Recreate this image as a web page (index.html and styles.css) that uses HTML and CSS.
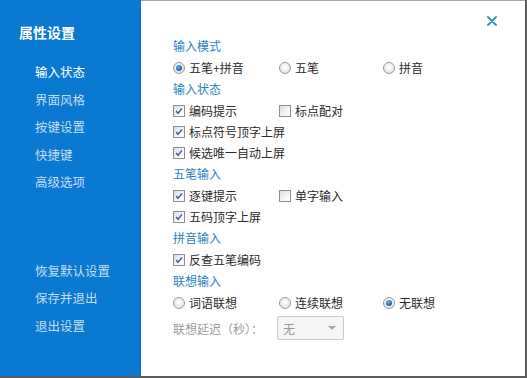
FILE: index.html
```html
<!DOCTYPE html>
<html lang="zh">
<head>
<meta charset="utf-8">
<title>属性设置</title>
<link rel="stylesheet" href="styles.css">
</head>
<body>
<div class="window">
  <aside class="sidebar">
    <div class="title">属性设置</div>
    <nav class="nav">
      <div class="nav-item active">输入状态</div>
      <div class="nav-item">界面风格</div>
      <div class="nav-item">按键设置</div>
      <div class="nav-item">快捷键</div>
      <div class="nav-item">高级选项</div>
    </nav>
    <nav class="nav nav-bottom">
      <div class="nav-item">恢复默认设置</div>
      <div class="nav-item">保存并退出</div>
      <div class="nav-item">退出设置</div>
    </nav>
  </aside>
  <main class="main">
    <button class="close" aria-label="关闭">
      <svg width="10" height="10" viewBox="0 0 10 10"><path d="M1 1L9 9M9 1L1 9" stroke="#3a8cc8" stroke-width="1.8" stroke-linecap="round"/></svg>
    </button>

    <div class="heading">输入模式</div>
    <div class="row">
      <label class="opt"><span class="radio checked"></span>五笔+拼音</label>
      <label class="opt"><span class="radio"></span>五笔</label>
      <label class="opt"><span class="radio"></span>拼音</label>
    </div>

    <div class="heading">输入状态</div>
    <div class="row">
      <label class="opt"><span class="cb"><svg viewBox="0 0 11 11"><path d="M2.3 5.6L4.4 8L8.8 2.6" fill="none" stroke="#3d5f9a" stroke-width="1.6"/></svg></span>编码提示</label>
      <label class="opt"><span class="cb"></span>标点配对</label>
    </div>
    <div class="row">
      <label class="opt wide"><span class="cb"><svg viewBox="0 0 11 11"><path d="M2.3 5.6L4.4 8L8.8 2.6" fill="none" stroke="#3d5f9a" stroke-width="1.6"/></svg></span>标点符号顶字上屏</label>
    </div>
    <div class="row">
      <label class="opt wide"><span class="cb"><svg viewBox="0 0 11 11"><path d="M2.3 5.6L4.4 8L8.8 2.6" fill="none" stroke="#3d5f9a" stroke-width="1.6"/></svg></span>候选唯一自动上屏</label>
    </div>

    <div class="heading">五笔输入</div>
    <div class="row">
      <label class="opt"><span class="cb"><svg viewBox="0 0 11 11"><path d="M2.3 5.6L4.4 8L8.8 2.6" fill="none" stroke="#3d5f9a" stroke-width="1.6"/></svg></span>逐键提示</label>
      <label class="opt"><span class="cb"></span>单字输入</label>
    </div>
    <div class="row">
      <label class="opt wide"><span class="cb"><svg viewBox="0 0 11 11"><path d="M2.3 5.6L4.4 8L8.8 2.6" fill="none" stroke="#3d5f9a" stroke-width="1.6"/></svg></span>五码顶字上屏</label>
    </div>

    <div class="heading">拼音输入</div>
    <div class="row">
      <label class="opt wide"><span class="cb"><svg viewBox="0 0 11 11"><path d="M2.3 5.6L4.4 8L8.8 2.6" fill="none" stroke="#3d5f9a" stroke-width="1.6"/></svg></span>反查五笔编码</label>
    </div>

    <div class="heading">联想输入</div>
    <div class="row">
      <label class="opt"><span class="radio"></span>词语联想</label>
      <label class="opt"><span class="radio"></span>连续联想</label>
      <label class="opt"><span class="radio checked"></span>无联想</label>
    </div>
    <div class="row delay">
      <span class="delay-label">联想延迟（秒）：</span>
      <div class="select"><span>无</span><span class="arrow"></span></div>
    </div>
  </main>
</div>
</body>
</html>
```

FILE: styles.css
```css
* { box-sizing: border-box; }
html, body { margin: 0; padding: 0; background: #fff; }
body {
  font-family: "Noto Sans CJK SC", "Microsoft YaHei", sans-serif;
  font-size: 12px;
  color: #2b2b2b;
}
.window {
  width: 527px;
  height: 378px;
  display: flex;
  border-right: 2px solid #5c5c5c;
  border-bottom: 2px solid #5c5c5c;
  background: #fff;
}
.sidebar {
  width: 141px;
  flex: none;
  background: #0a79d1;
  padding: 22px 0 0 19px;
  display: flex;
  flex-direction: column;
}
.title {
  color: #fff;
  font-size: 14px;
  font-weight: bold;
  line-height: 20px;
  height: 20px;
}
.nav {
  margin-top: 16px;
  padding-left: 16px;
}
.nav-bottom { margin-top: 61px; }
.nav-item {
  height: 27.5px;
  line-height: 27.5px;
  font-size: 12.5px;
  color: #c4ddf3;
  white-space: nowrap;
}
.nav-item.active { color: #fff; }

.main {
  flex: 1;
  position: relative;
  border-top: 1px solid #a8a8a8;
  padding: 34px 0 0 32px;
  display: flex;
  flex-direction: column;
}
.close {
  position: absolute;
  left: 344px;
  top: 13px;
  width: 14px;
  height: 14px;
  padding: 2px;
  border: 0;
  background: none;
  display: flex;
  align-items: center;
  justify-content: center;
}
.heading {
  height: 22px;
  line-height: 22px;
  color: #2a82c5;
}
.row {
  height: 21px;
  display: grid;
  grid-template-columns: 106px 104px auto;
  align-items: center;
}
.opt {
  display: flex;
  align-items: center;
  white-space: nowrap;
  line-height: 21px;
}
.opt.wide { grid-column: 1 / 4; }
.radio {
  width: 12px;
  height: 12px;
  border-radius: 50%;
  border: 1px solid #9b9b9b;
  background: radial-gradient(circle at 50% 40%, #ffffff 0%, #e6e6e6 70%, #d4d4d4 100%);
  margin-right: 4px;
  position: relative;
  flex: none;
}
.radio.checked::after {
  content: "";
  position: absolute;
  left: 2px;
  top: 2px;
  width: 6px;
  height: 6px;
  border-radius: 50%;
  background: radial-gradient(circle at 40% 35%, #6fb6ec 0%, #2a6fb0 55%, #143e6e 100%);
}
.cb {
  width: 12px;
  height: 12px;
  border: 1px solid #8e8e8e;
  background: linear-gradient(135deg, #dcdcdc 0%, #f6f6f6 60%, #ffffff 100%);
  margin-right: 4px;
  flex: none;
  display: flex;
}
.cb svg { width: 10px; height: 10px; }
.delay {
  height: 30px;
  display: flex;
  align-items: center;
}
.delay-label {
  color: #9c9c9c;
  width: 104px;
  flex: none;
}
.select {
  width: 67px;
  height: 24px;
  border: 1px solid #c9c9c9;
  border-radius: 2px;
  background: #f5f5f5;
  display: flex;
  align-items: center;
  justify-content: space-between;
  padding: 0 7px 0 5px;
  color: #9a9a9a;
}
.arrow {
  width: 0;
  height: 0;
  border-left: 4px solid transparent;
  border-right: 4px solid transparent;
  border-top: 4px solid #a5a5a5;
}
```
